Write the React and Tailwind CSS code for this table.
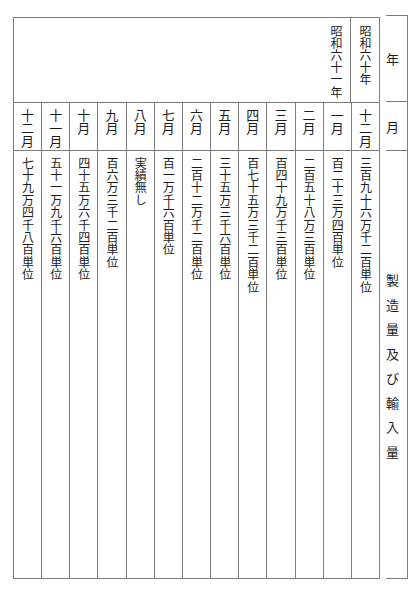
import React from 'react';

const rows = [
  { month: '十二月', value: '三百九十六万千二百単位' },
  { month: '一月', value: '百二十三万四百単位' },
  { month: '二月', value: '二百五十八万三百単位' },
  { month: '三月', value: '百四十九万千三百単位' },
  { month: '四月', value: '百七十五万三千二百単位' },
  { month: '五月', value: '三十五万三千六百単位' },
  { month: '六月', value: '二百十二万千二百単位' },
  { month: '七月', value: '百一万千六百単位' },
  { month: '八月', value: '実績無し' },
  { month: '九月', value: '百六万三千二百単位' },
  { month: '十月', value: '四十五万六千四百単位' },
  { month: '十一月', value: '五十一万九千六百単位' },
  { month: '十二月', value: '七十九万四千八百単位' },
];

const label = '製造量及び輸入量'.split('');

export default function App() {
  return (
    <div
      className="w-[419px] h-[608px] bg-white text-[#1c1c1c] flex flex-row overflow-hidden"
      style={{ fontFamily: '"Noto Sans CJK JP", "Noto Sans CJK SC", sans-serif' }}
    >
      {/* Main table, read right to left */}
      <div className="ml-[13px] mt-[17px] w-[367px] h-[562px] border border-[#7c7c7c] flex flex-col">
        {/* Year row */}
        <div className="h-[85px] flex flex-row-reverse border-b border-[#7c7c7c]">
          <div className="w-[28px] flex justify-center pt-[7px]">
            <span className="[writing-mode:vertical-rl] text-[12px] leading-none tracking-[0.2px]">昭和六十年</span>
          </div>
          <div className="flex-1 border-r border-[#7c7c7c] flex flex-row-reverse">
            <div className="w-[28px] flex justify-center pt-[7px]">
              <span className="[writing-mode:vertical-rl] text-[12px] leading-none tracking-[0.2px]">昭和六十一年</span>
            </div>
          </div>
        </div>

        {/* Month row */}
        <div className="h-[48px] flex flex-row-reverse border-b border-[#7c7c7c]">
          {rows.map((r, i) => (
            <div
              key={i}
              className={`flex-1 flex justify-center pt-[6px] ${i > 0 ? 'border-r border-[#7c7c7c]' : ''}`}
            >
              <span className="[writing-mode:vertical-rl] text-[13px] leading-none">{r.month}</span>
            </div>
          ))}
        </div>

        {/* Amount row */}
        <div className="flex-1 flex flex-row-reverse">
          {rows.map((r, i) => (
            <div
              key={i}
              className={`flex-1 flex justify-center pt-[6px] ${i > 0 ? 'border-r border-[#7c7c7c]' : ''}`}
            >
              <span className="[writing-mode:vertical-rl] text-[12px] leading-none tracking-[0.4px]">{r.value}</span>
            </div>
          ))}
        </div>
      </div>

      {/* Heading column */}
      <div className="ml-[6px] mt-[15px] w-[22px] h-[564px] border-t border-b border-r border-[#7c7c7c] flex flex-col">
        <div className="h-[86px] border-b border-[#7c7c7c] flex items-center">
          <span className="text-[13px] leading-none">年</span>
        </div>
        <div className="h-[49px] border-b border-[#7c7c7c] flex items-center">
          <span className="text-[13px] leading-none">月</span>
        </div>
        <div className="flex-1 flex flex-col justify-center gap-[11.5px] pt-[2px]">
          {label.map((c, i) => (
            <span key={i} className="text-[13px] leading-none">{c}</span>
          ))}
        </div>
      </div>
    </div>
  );
}
